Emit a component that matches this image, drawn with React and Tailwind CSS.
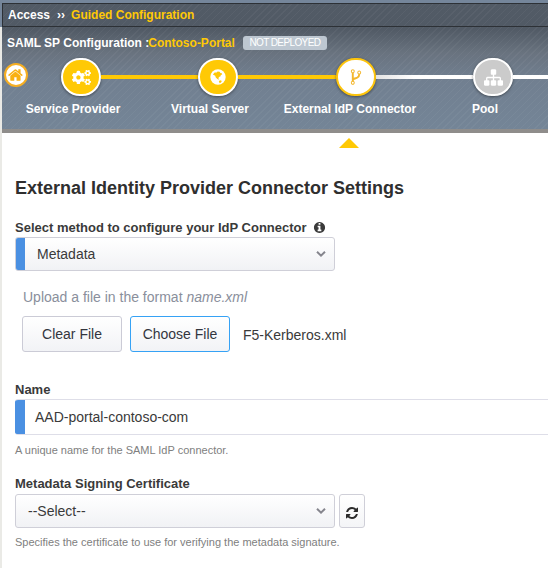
import React from "react";
import { FaCogs } from "react-icons/fa";

const ICONS = {
  home: "M1408 992v480q0 26-19 45t-45 19h-384v-384h-256v384h-384q-26 0-45-19t-19-45v-480q0-1 .5-3t.5-3l575-474 575 474q1 2 1 6zm223-69l-62 74q-8 9-21 11h-3q-13 0-21-7l-692-577-692 577q-12 8-24 7-13-2-21-11l-62-74q-8-10-7-23.5t11-21.5l719-599q32-26 76-26t76 26l244 204v-195q0-14 9-23t23-9h192q14 0 23 9t9 23v408l219 182q10 8 11 21.5t-7 23.5z",
  refresh:
    "M1639 1056q0 5-1 7-64 268-268 434.5t-478 166.5q-146 0-282.5-55t-243.5-157l-129 129q-19 19-45 19t-45-19-19-45v-448q0-26 19-45t45-19h448q26 0 45 19t19 45-19 45l-137 137q71 66 161 102t187 36q134 0 250-65t186-179q11-17 53-117 8-23 30-23h192q13 0 22.5 9.5t9.5 22.5zm25-800v448q0 26-19 45t-45 19h-448q-26 0-45-19t-19-45 19-45l138-138q-148-137-349-137-134 0-250 65t-186 179q-11 17-53 117-8 23-30 23h-199q-13 0-22.5-9.5t-9.5-22.5v-7q65-268 270-434.5t480-166.5q146 0 284 55.5t245 156.5l130-129q19-19 45-19t45 19 19 45z",
  fork: "M672 1472q0-40-28-68t-68-28-68 28-28 68 28 68 68 28 68-28 28-68zm0-1152q0-40-28-68t-68-28-68 28-28 68 28 68 68 28 68-28 28-68zm640 128q0-40-28-68t-68-28-68 28-28 68 28 68 68 28 68-28 28-68zm96 0q0 52-26 96.5t-70 69.5q-2 287-226 414-67 38-203 81-128 40-169.5 71t-41.5 100v26q44 25 70 69.5t26 96.5q0 80-56 136t-136 56-136-56-56-136q0-52 26-96.5t70-69.5v-820q-44-25-70-69.5t-26-96.5q0-80 56-136t136-56 136 56 56 136q0 52-26 96.5t-70 69.5v497q54-26 154-57 55-17 87.5-29.5t70.5-31 59-39.5 40.5-51 28-69.5 8.5-91.5q-44-25-70-69.5t-26-96.5q0-80 56-136t136-56 136 56 56 136z",
  sitemap:
    "M1792 1248v320q0 40-28 68t-68 28h-320q-40 0-68-28t-28-68v-320q0-40 28-68t68-28h96v-192h-512v192h96q40 0 68 28t28 68v320q0 40-28 68t-68 28h-320q-40 0-68-28t-28-68v-320q0-40 28-68t68-28h96v-192h-512v192h96q40 0 68 28t28 68v320q0 40-28 68t-68 28h-320q-40 0-68-28t-28-68v-320q0-40 28-68t68-28h96v-192q0-52 38-90t90-38h512v-192h-96q-40 0-68-28t-28-68v-320q0-40 28-68t68-28h320q40 0 68 28t28 68v320q0 40-28 68t-68 28h-96v192h512q52 0 90 38t38 90v192h96q40 0 68 28t28 68z",
  info: "M1152 1376v-160q0-14-9-23t-23-9h-96v-512q0-14-9-23t-23-9h-320q-14 0-23 9t-9 23v160q0 14 9 23t23 9h96v320h-96q-14 0-23 9t-9 23v160q0 14 9 23t23 9h448q14 0 23-9t9-23zm-128-896v-160q0-14-9-23t-23-9h-192q-14 0-23 9t-9 23v160q0 14 9 23t23 9h192q14 0 23-9t9-23zm640 416q0 209-103 385.5t-279.5 279.5-385.5 103-385.5-103-279.5-279.5-103-385.5 103-385.5 279.5-279.5 385.5-103 385.5 103 279.5 279.5 103 385.5z",
};

function Icon({ name, className }) {
  return (
    <svg viewBox="0 0 1792 1792" fill="currentColor" className={className}>
      <path d={ICONS[name]} />
    </svg>
  );
}

function Globe() {
  return (
    <svg viewBox="0 0 16 16" className="size-4">
      <circle cx="8" cy="8" r="7.7" fill="#fff" />
      <path
        d="M2.9 5.4 4.6 3.4 6.6 3.6 7.6 2.4 9.6 2.8 10.4 4 11.8 4.2 12.2 5.6 10.8 6 10.6 7.2 9 8 8.4 9.2 9.2 10.8 7.4 10 5.8 8.6 5.2 6.8Z"
        fill="#ffc905"
      />
      <path d="M8.8 12 10.4 11.2 11.8 12 11 13.4 9.6 14.2Z" fill="#ffc905" />
    </svg>
  );
}

function Step({ className, children }) {
  return (
    <div
      className={`flex h-[38px] w-10 shrink-0 items-center justify-center rounded-full border-2 shadow-[0_1px_3px_rgba(0,0,0,0.45)] ${className}`}
    >
      {children}
    </div>
  );
}

function Chevron() {
  return (
    <svg viewBox="0 0 10 6" className="ml-auto mr-2 h-1.5 w-2.5" fill="none" stroke="#85858d" strokeWidth="2">
      <path d="M1 0.8 5 4.6 9 0.8" />
    </svg>
  );
}

const BUTTON =
  "flex h-9 w-[100px] items-center justify-center rounded-[3px] border bg-linear-to-b from-white to-[#f2f3f6] text-[14px] text-[#33363f]";

export default function App() {
  return (
    <div className="flex h-[568px] w-[548px] flex-col overflow-hidden bg-white font-['Liberation_Sans',Arial,sans-serif]">
      <div className="h-[3px] bg-[#75869b]" />
      <div className="flex h-[130px]">
        <div className="w-0.5 shrink-0 bg-linear-to-b from-[#75869b] from-[24px] to-[#eaeae6] to-[24px]" />
        <div className="flex w-[546px] flex-col border-b-4 border-[#8f8d8b] bg-[repeating-linear-gradient(135deg,rgba(255,255,255,0.04)_0_1px,transparent_1px_5px),linear-gradient(to_bottom,#525b66_0,#515a65_26px,#69737f_50px,#717f90_75px,#748597_100%)]">
          <nav className="flex h-6 shrink-0 items-center border-y border-l border-[#2d3136] pl-[5px] text-[12px] font-bold text-white">
            <span>Access</span>
            <span className="ml-[7px]">››</span>
            <span className="ml-[6px] text-[#ffc905]">Guided Configuration</span>
          </nav>
          <div className="flex h-[31px] shrink-0 items-center pl-[5px] text-[12px] font-bold whitespace-nowrap text-white">
            <span>SAML SP Configuration :</span>
            <span className="-ml-px text-[#ffc905]">Contoso-Portal</span>
            <span className="ml-2 flex h-3.5 w-[84px] shrink-0 items-center justify-center rounded-[3px] bg-[#bdc7d1] text-[10px] leading-none font-normal tracking-[-0.6px]">
              NOT DEPLOYED
            </span>
          </div>
          <div className="flex h-[38px] shrink-0 items-center pl-0.5">
            <div className="mb-1 flex size-6 shrink-0 items-center justify-center rounded-full border-2 border-[#f5ae23] bg-white text-[#f9b012]">
              <Icon name="home" className="size-4" />
            </div>
            <Step className="ml-[33px] border-white bg-[#ffc905] text-white">
              <FaCogs className="size-[19px]" />
            </Step>
            <div className="h-1 w-[97px] bg-[#ffc905]" />
            <Step className="border-white bg-[#ffc905] text-white">
              <Globe />
            </Step>
            <div className="h-1 w-[98px] bg-[#ffc905]" />
            <Step className="border-[#fdc40c] bg-white text-[#f3b62c]">
              <Icon name="fork" className="size-[18px]" />
            </Step>
            <div className="h-1 w-[97px] bg-linear-to-r from-[#e4e4e4] to-white to-40%" />
            <Step className="border-white bg-[#cbcbcb] text-white">
              <Icon name="sitemap" className="size-[19px]" />
            </Step>
            <div className="h-1 w-[35px] bg-white" />
          </div>
          <div className="flex h-[25px] items-center pl-0.5 text-center text-[12px] font-bold text-white">
            <span className="w-[138px]">Service Provider</span>
            <span className="w-[136px]">Virtual Server</span>
            <span className="w-[144px]">External IdP Connector</span>
            <span className="w-[126px]">Pool</span>
          </div>
        </div>
      </div>

      <main className="flex flex-1 flex-col border-l-2 border-[#eaeae6] pl-[13px] text-[#3a3a3a]">
        <svg viewBox="0 0 20 10" className="ml-[324px] mt-[5px] h-2.5 w-5 shrink-0" fill="#ffc905">
          <path d="M10 0 20 10H0Z" />
        </svg>
        <h1 className="mt-[28px] h-6 text-[18px] leading-6 font-bold text-[#2f2f2f]">
          External Identity Provider Connector Settings
        </h1>
        <label className="mt-[19px] flex h-[18px] items-center text-[13px] font-bold">
          Select method to configure your IdP Connector
          <Icon name="info" className="mb-px ml-[6px] size-[13px]" />
        </label>
        <div className="flex h-[34px] w-80 items-center overflow-hidden rounded-[3px] border border-[#cfcfd8] bg-linear-to-b from-white to-[#f1f2f5] text-[14px]">
          <div className="-ml-px h-[34px] w-2.5 shrink-0 bg-[#4a90e2]" />
          <span className="ml-3">Metadata</span>
          <Chevron />
        </div>
        <p className="ml-2 mt-[17px] h-[18px] text-[14px] leading-[18px] text-[#8a8f9c]">
          Upload a file in the format <em>name.xml</em>
        </p>
        <div className="ml-[7px] mt-[10px] flex items-center">
          <button className={`${BUTTON} border-[#cbcbd6]`}>Clear File</button>
          <button className={`${BUTTON} ml-2 border-[#36a2f5]`}>Choose File</button>
          <span className="ml-[13px] mt-0.5 text-[14px]">F5-Kerberos.xml</span>
        </div>
        <label className="mt-[29px] h-[18px] text-[13px] leading-[18px] font-bold">Name</label>
        <div className="flex h-9 items-center overflow-hidden rounded-l-[3px] border-y border-[#dedee8] text-[14px]">
          <div className="h-9 w-2.5 shrink-0 bg-[#4a90e2]" />
          <span className="ml-2.5">AAD-portal-contoso-com</span>
        </div>
        <p className="mt-[7px] h-4 text-[11px] leading-4 text-[#808080]">A unique name for the SAML IdP connector.</p>
        <label className="mt-[17px] h-[18px] text-[13px] leading-[18px] font-bold">Metadata Signing Certificate</label>
        <div className="flex">
          <div className="mt-px flex h-[34px] w-80 items-center rounded-[3px] border border-[#cfcfd8] bg-linear-to-b from-white to-[#f1f2f5] text-[14px]">
            <span className="ml-3">--Select--</span>
            <Chevron />
          </div>
          <button className="ml-1 mt-px flex h-[34px] w-[26px] items-center justify-center rounded-[3px] border border-[#cfcfd8] bg-linear-to-b from-white to-[#f4f5f7] pt-1 text-[#2b2b2b]">
            <Icon name="refresh" className="size-3.5" />
          </button>
        </div>
        <p className="mt-[6px] h-4 text-[11px] leading-4 text-[#808080]">
          Specifies the certificate to use for verifying the metadata signature.
        </p>
      </main>
    </div>
  );
}
